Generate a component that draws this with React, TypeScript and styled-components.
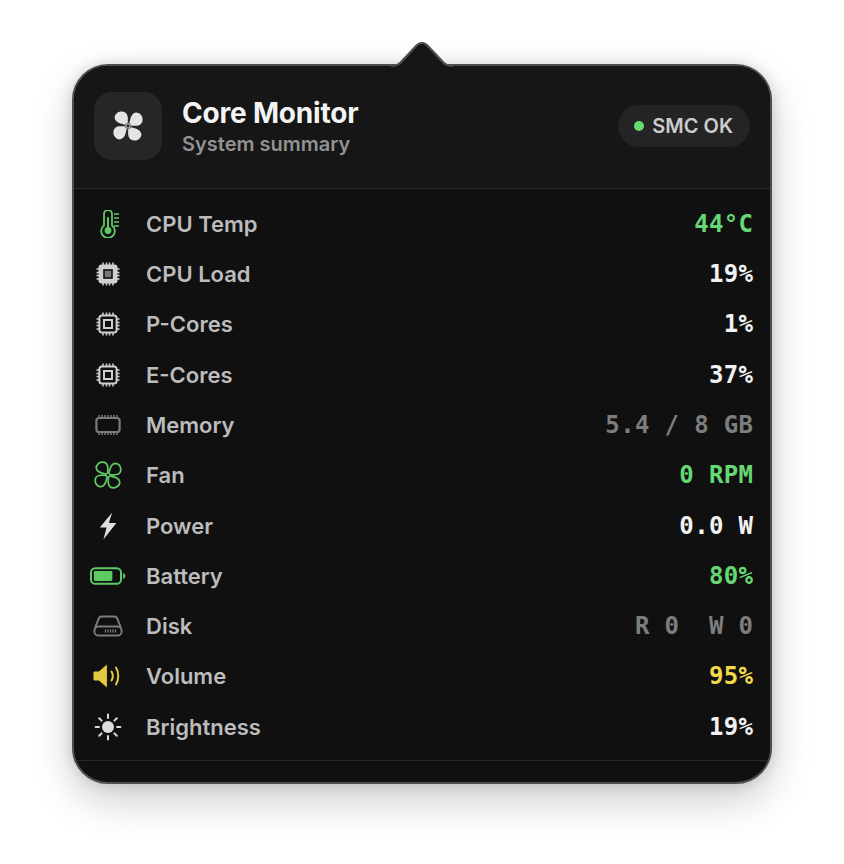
import React from "react";
import styled, { createGlobalStyle } from "styled-components";

const GREEN = "#5fc966";
const GREY = "#cfcfcf";
const DIM = "#7b7b7b";
const YELLOW = "#e3c93f";

const Global = createGlobalStyle`
  html, body {
    margin: 0;
    padding: 0;
    background: #fff;
  }
  body {
    font-family: Inter, "Liberation Sans", sans-serif;
  }
`;

const Page = styled.div`
  width: 844px;
  height: 864px;
  padding: 64px 72px 0;
  box-sizing: border-box;
  overflow: hidden;
`;

const Panel = styled.div`
  position: relative;
  width: 700px;
  height: 720px;
  box-sizing: border-box;
  background: #101010;
  border: 2px solid #4e4e4e;
  border-radius: 36px;
  box-shadow: 0 16px 40px rgba(0, 0, 0, 0.2), 0 0 14px rgba(0, 0, 0, 0.14);
`;

const Clip = styled.div`
  height: 100%;
  overflow: hidden;
  border-radius: 34px;
`;

const Arrow = styled.svg`
  position: absolute;
  left: 317px;
  top: -24px;
  width: 62px;
  height: 26px;
  display: block;
`;

const Header = styled.header`
  display: flex;
  align-items: center;
  gap: 20px;
  height: 122px;
  padding: 0 20px;
  background: #161616;
  border-bottom: 1.5px solid #2a2a2a;
`;

const Tile = styled.div`
  display: flex;
  align-items: center;
  justify-content: center;
  width: 68px;
  height: 68px;
  margin-top: -2px;
  border-radius: 18px;
  background: #262626;
`;

const Titles = styled.div`
  display: flex;
  flex-direction: column;
  flex: 1;
`;

const Title = styled.div`
  font-size: 28px;
  line-height: 32px;
  font-weight: 700;
  color: #f4f4f4;
  letter-spacing: -0.2px;
`;

const Subtitle = styled.div`
  margin-top: 2px;
  font-size: 20px;
  line-height: 26px;
  font-weight: 600;
  color: #929292;
`;

const Pill = styled.div`
  display: flex;
  align-items: center;
  gap: 8px;
  height: 42px;
  margin-top: -2px;
  padding: 0 17px 0 16px;
  border-radius: 21px;
  background: #242424;
  font-size: 20px;
  font-weight: 600;
  color: #cccccc;
`;

const Dot = styled.span`
  width: 10px;
  height: 10px;
  border-radius: 50%;
  background: #66dc70;
`;

const List = styled.div`
  display: flex;
  flex-direction: column;
  padding: 9.6px 17px 8.4px 16px;
  border-bottom: 1.5px solid #282828;
`;

const Row = styled.div`
  display: flex;
  align-items: center;
  height: 50.3px;
`;

const IconSlot = styled.div`
  display: flex;
  align-items: center;
  justify-content: center;
  flex: 0 0 36px;
  height: 36px;
  margin-right: 20px;
`;

const Label = styled.div`
  flex: 1;
  font-size: 22px;
  font-weight: 600;
  color: #bcbcbc;
`;

const Value = styled.div<{ $color: string }>`
  font-family: "DejaVu Sans Mono", monospace;
  font-size: 24px;
  font-weight: 700;
  letter-spacing: 0.35px;
  margin-right: -0.35px;
  white-space: pre;
  color: ${(p) => p.$color};
`;

const petal =
  "M-0.5 -1.6 C-0.1 -5 0.1 -8 -0.6 -10.5 C-1.4 -13.4 -4 -14.8 -7 -14.6 C-10.5 -14.4 -13.4 -11.5 -13.4 -8.2 C-13 -4.6 -9.5 -3 -6.5 -2.2 C-4.5 -1.8 -3 -1.2 -2 -0.5 Z";

const FanPetals = ({ fill, stroke }: { fill: string; stroke: string }) => (
  <>
    {[0, 90, 180, 270].map((a) => (
      <path
        key={a}
        d={petal}
        transform={`rotate(${a})`}
        fill={fill}
        stroke={stroke}
        strokeWidth={stroke === "none" ? 0 : 2}
        strokeLinejoin="round"
      />
    ))}
  </>
);

const HeaderFan = () => (
  <svg width="32" height="32" viewBox="-16 -16 32 32">
    <FanPetals fill="#e4e4e4" stroke="none" />
    <circle r="3" fill="#262626" />
    <circle r="2.2" fill="none" stroke="#e4e4e4" strokeWidth="1" />
  </svg>
);

const FanIcon = () => (
  <svg width="28" height="28" viewBox="-16 -16 32 32">
    <FanPetals fill="none" stroke={GREEN} />
    <circle r="2.2" fill="#101010" stroke={GREEN} strokeWidth="1.5" />
  </svg>
);

const Thermo = () => (
  <svg width="28" height="28" viewBox="0 0 28 28" fill="none">
    <path d="M10 4a4 4 0 0 1 8 0v11.6a6.8 6.8 0 1 1-8 0z" stroke={GREEN} strokeWidth="1.8" />
    <circle cx="14" cy="20.5" r="3.4" fill={GREEN} />
    <path d="M14 8v11" stroke={GREEN} strokeWidth="2" strokeLinecap="round" />
    <path d="M20 4h5M20 8h5M20 12h5M20 16h5" stroke={GREEN} strokeWidth="1.3" />
  </svg>
);

const pinOffsets = [7.5, 11, 14, 17.5];

const Chip = ({ variant }: { variant: "solid" | "outline" }) => (
  <svg width="26" height="26" viewBox="0 0 26 26" fill="none">
    {pinOffsets.map((o) => (
      <g key={o} stroke={GREY} strokeWidth="1.5">
        <path d={`M${o + 0.5} 1.5v3M${o + 0.5} 21.5v3M1.5 ${o + 0.5}h3M21.5 ${o + 0.5}h3`} />
      </g>
    ))}
    {variant === "solid" ? (
      <>
        <rect x="3.5" y="3.5" width="19" height="19" rx="3" fill={GREY} />
        <rect x="8.2" y="8.2" width="9.6" height="9.6" fill="#101010" />
        <rect x="9.8" y="9.8" width="6.4" height="6.4" fill="#777" />
      </>
    ) : (
      <>
        <rect x="4.4" y="4.4" width="17.2" height="17.2" rx="2.6" stroke={GREY} strokeWidth="2" />
        <rect x="9" y="9" width="8" height="8" stroke={GREY} strokeWidth="2" />
      </>
    )}
  </svg>
);

const Ram = () => (
  <svg width="28" height="24" viewBox="0 0 28 24" fill="none">
    <rect x="2.4" y="5" width="23.2" height="14" rx="2.8" stroke={DIM} strokeWidth="2.2" />
    <path
      d="M5 2v2.5M8 2v2.5M11 2v2.5M14 2v2.5M17 2v2.5M20 2v2.5M23 2v2.5M5 19.5v2.5M8 19.5v2.5M11 19.5v2.5M14 19.5v2.5M17 19.5v2.5M20 19.5v2.5M23 19.5v2.5"
      stroke={DIM}
      strokeWidth="1.5"
    />
  </svg>
);

const Bolt = () => (
  <svg width="20" height="28" viewBox="0 0 20 28">
    <path d="M14.2 0.5 L1.8 15.4 H8.6 L5.4 27.5 L18.4 11 H10.8 Z" fill="#dedede" />
  </svg>
);

const Battery = () => (
  <svg width="36" height="18" viewBox="0 0 36 18" fill="none">
    <rect x="1" y="1.2" width="30" height="15.6" rx="4.4" stroke={GREEN} strokeWidth="2" />
    <rect x="3.8" y="4" width="18.6" height="10" rx="1.4" fill={GREEN} />
    <path d="M33.2 6c1.4.5 2.2 1.7 2.2 3s-.8 2.5-2.2 3z" fill={GREEN} />
  </svg>
);

const Disk = () => (
  <svg width="30" height="22" viewBox="0 0 30 22" fill="none">
    <path
      d="M2 13 L5.6 3.8 C6.1 2.4 7.2 1.4 8.6 1.4 H21.4 C22.8 1.4 23.9 2.4 24.4 3.8 L28 13"
      stroke={DIM}
      strokeWidth="2"
    />
    <rect x="1.4" y="11.6" width="27.2" height="9" rx="4.2" stroke={DIM} strokeWidth="2" />
    <path d="M12.5 14.4v3M15 14.4v3M17.5 14.4v3M20 14.4v3M22.5 14.4v3" stroke={DIM} strokeWidth="1.3" />
  </svg>
);

const Volume = () => (
  <svg width="30" height="24" viewBox="0 0 30 24" fill="none">
    <path d="M1 8 H6 L13.4 1.4 V22.6 L6 16 H1 Z" fill={YELLOW} stroke={YELLOW} strokeWidth="1" strokeLinejoin="round" />
    <path d="M18.5 7.5c1.6 2.7 1.6 6.3 0 9" stroke={YELLOW} strokeWidth="2" strokeLinecap="round" />
    <path d="M23 3.5c3 5 3 12 0 17" stroke={YELLOW} strokeWidth="2" strokeLinecap="round" />
  </svg>
);

const Sun = () => (
  <svg width="28" height="28" viewBox="0 0 28 28" fill="none">
    <circle cx="14" cy="14" r="6" fill="#dcdcdc" />
    <path
      d="M14 1.6v3.4M14 23v3.4M1.6 14h3.4M23 14h3.4M5.2 5.2l2.4 2.4M20.4 20.4l2.4 2.4M22.8 5.2l-2.4 2.4M7.6 20.4l-2.4 2.4"
      stroke="#dcdcdc"
      strokeWidth="2"
      strokeLinecap="round"
    />
  </svg>
);

const WHITE = "#f2f2f2";
const VGREEN = "#66d873";
const VDIM = "#7d7d7d";
const VYELLOW = "#f3d84b";

const rows: { icon: React.ReactNode; label: string; value: string; color: string }[] = [
  { icon: <Thermo />, label: "CPU Temp", value: "44°C", color: VGREEN },
  { icon: <Chip variant="solid" />, label: "CPU Load", value: "19%", color: WHITE },
  { icon: <Chip variant="outline" />, label: "P-Cores", value: "1%", color: WHITE },
  { icon: <Chip variant="outline" />, label: "E-Cores", value: "37%", color: WHITE },
  { icon: <Ram />, label: "Memory", value: "5.4 / 8 GB", color: VDIM },
  { icon: <FanIcon />, label: "Fan", value: "0 RPM", color: VGREEN },
  { icon: <Bolt />, label: "Power", value: "0.0 W", color: WHITE },
  { icon: <Battery />, label: "Battery", value: "80%", color: VGREEN },
  { icon: <Disk />, label: "Disk", value: "R 0  W 0", color: VDIM },
  { icon: <Volume />, label: "Volume", value: "95%", color: VYELLOW },
  { icon: <Sun />, label: "Brightness", value: "19%", color: WHITE },
];

export default function App() {
  return (
    <Page>
      <Global />
      <Panel>
        <Arrow viewBox="0 0 62 26">
          <path
            d="M0 25 C5 25 7 24 10 21 L26 4 C29 0.6 33 0.6 36 4 L52 21 C55 24 57 25 62 25 V26 H0 Z"
            fill="#161616"
          />
          <path
            d="M0 24 C5 24 7 23 9.5 20.5 L25.5 3.5 C29 0 33 0 36.5 3.5 L52.5 20.5 C55 23 57 24 62 24"
            fill="none"
            stroke="#4e4e4e"
            strokeWidth="2"
          />
        </Arrow>
        <Clip>
          <Header>
            <Tile>
              <HeaderFan />
            </Tile>
            <Titles>
              <Title>Core Monitor</Title>
              <Subtitle>System summary</Subtitle>
            </Titles>
            <Pill>
              <Dot />
              SMC OK
            </Pill>
          </Header>
          <List>
            {rows.map((r) => (
              <Row key={r.label}>
                <IconSlot>{r.icon}</IconSlot>
                <Label>{r.label}</Label>
                <Value $color={r.color}>{r.value}</Value>
              </Row>
            ))}
          </List>
        </Clip>
      </Panel>
    </Page>
  );
}
